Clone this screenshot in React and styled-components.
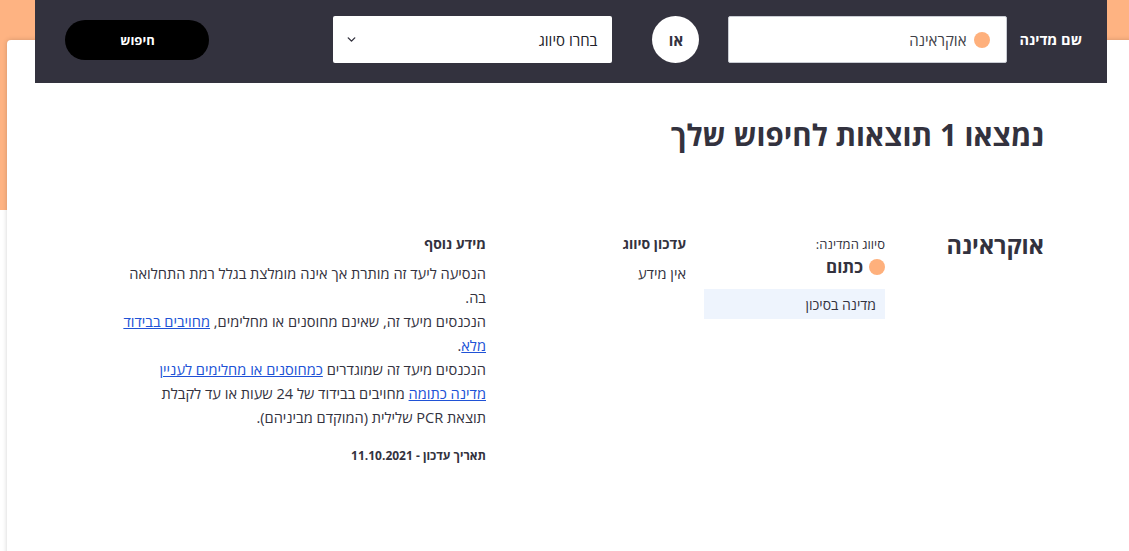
import React from "react";
import styled, { createGlobalStyle } from "styled-components";
import { ChevronDown } from "lucide-react";

const GlobalStyle = createGlobalStyle`
  html, body {
    margin: 0;
    padding: 0;
    overflow: hidden;
    background: #ffffff;
  }
  body {
    font-family: "Open Sans", "DejaVu Sans", sans-serif;
    color: #33323e;
  }
`;

const App = () => {
  return (
    <Page>
      <GlobalStyle />
      <Card>
        <SearchBar>
          <FieldLabel>שם מדינה</FieldLabel>
          <CountryInput>
            <Dot />
            <span>אוקראינה</span>
          </CountryInput>
          <OrCircle>או</OrCircle>
          <Select>
            <span>בחרו סיווג</span>
            <ChevronDown size={13} strokeWidth={2.6} color="#33323e" />
          </Select>
          <SearchButton>חיפוש</SearchButton>
        </SearchBar>

        <Content>
          <Title>נמצאו 1 תוצאות לחיפוש שלך</Title>

          <ResultRow>
            <CountryName>אוקראינה</CountryName>

            <Column>
              <SmallLabel>סיווג המדינה:</SmallLabel>
              <StatusLine>
                <Dot />
                <StatusText>כתום</StatusText>
              </StatusLine>
              <RiskBox>מדינה בסיכון</RiskBox>
            </Column>

            <Column>
              <ColHead>עדכון סיווג</ColHead>
              <BodyText>אין מידע</BodyText>
            </Column>

            <Column>
              <ColHead>מידע נוסף</ColHead>
              <BodyText>
                הנסיעה ליעד זה מותרת אך אינה מומלצת בגלל רמת התחלואה בה.
                <br />
                הנכנסים מיעד זה, שאינם מחוסנים או מחלימים,{" "}
                <InfoLink href="#">מחויבים בבידוד מלא</InfoLink>.
                <br />
                הנכנסים מיעד זה שמוגדרים{" "}
                <InfoLink href="#">כמחוסנים או מחלימים לעניין מדינה כתומה</InfoLink>{" "}
                מחויבים בבידוד של 24 שעות או עד לקבלת תוצאת PCR שלילית (המוקדם מביניהם).
              </BodyText>
              <UpdateDate>תאריך עדכון - 11.10.2021</UpdateDate>
            </Column>
          </ResultRow>
        </Content>
      </Card>
    </Page>
  );
};

export default App;

const Page = styled.div`
  direction: rtl;
  min-height: 551px;
  padding-top: 40px;
  box-sizing: border-box;
  background: linear-gradient(#feb382 0, #feb382 210px, #ffffff 210px);
`;

const Card = styled.div`
  direction: ltr;
  margin-left: 7px;
  margin-right: -20px;
  min-height: 530px;
  background: #ffffff;
  border-radius: 4px 0 0 0;
  box-shadow: 0 0 5px rgba(0, 0, 0, 0.18);
  display: flex;
  flex-direction: column;
`;

const SearchBar = styled.div`
  direction: rtl;
  margin-top: -40px;
  margin-left: 28px;
  width: 1072px;
  height: 83px;
  box-sizing: border-box;
  padding: 0 25px 4px 0;
  background: #33323e;
  display: flex;
  align-items: center;
`;

const FieldLabel = styled.label`
  color: #ffffff;
  font-weight: 700;
  font-size: 14.5px;
  margin-left: 12px;
`;

const CountryInput = styled.div`
  width: 279px;
  height: 47px;
  box-sizing: border-box;
  background: #ffffff;
  border: 1px solid #c9ccd3;
  border-radius: 2px;
  padding: 0 16px;
  display: flex;
  align-items: center;
  gap: 8px;
  font-size: 15px;
  color: #3f3f48;
  margin-left: 29px;
`;

const Dot = styled.span`
  width: 16px;
  height: 16px;
  border-radius: 50%;
  background: #feb07c;
  flex-shrink: 0;
`;

const OrCircle = styled.div`
  width: 47px;
  height: 47px;
  border-radius: 50%;
  background: #ffffff;
  display: flex;
  align-items: center;
  justify-content: center;
  font-weight: 700;
  font-size: 15px;
  color: #33323e;
  margin-left: 40px;
`;

const Select = styled.div`
  width: 279px;
  height: 47px;
  box-sizing: border-box;
  background: #ffffff;
  border-radius: 2px;
  padding: 0 15px 0 12px;
  display: flex;
  align-items: center;
  justify-content: space-between;
  font-size: 15px;
  color: #22222a;
  margin-left: 124px;
`;

const SearchButton = styled.button`
  width: 144px;
  height: 40px;
  border: none;
  border-radius: 20px;
  background: #000000;
  color: #ffffff;
  font-family: inherit;
  font-weight: 700;
  font-size: 13px;
  cursor: pointer;
`;

const Content = styled.div`
  direction: rtl;
  padding: 30px 85px 40px 0;
  width: 1037px;
  box-sizing: content-box;
`;

const Title = styled.h1`
  margin: 0;
  font-size: 29.5px;
  font-weight: 700;
  line-height: 44px;
  color: #33323e;
`;

const ResultRow = styled.div`
  display: grid;
  grid-template-columns: 141px 181px 182px 363px;
  column-gap: 18px;
  margin-top: 73px;
  align-items: start;
`;

const CountryName = styled.h2`
  margin: 0;
  font-size: 23.5px;
  font-weight: 700;
  line-height: 30px;
  color: #33323e;
`;

const Column = styled.div`
  display: flex;
  flex-direction: column;
  padding-top: 6px;
`;

const SmallLabel = styled.div`
  font-size: 13px;
  line-height: 16px;
  color: #33323e;
`;

const StatusLine = styled.div`
  display: flex;
  align-items: center;
  gap: 6px;
  margin: 4px 0 11px;
`;

const StatusText = styled.span`
  font-size: 17px;
  font-weight: 700;
  line-height: 22px;
`;

const RiskBox = styled.div`
  background: #eef4fd;
  height: 30px;
  padding: 0 9px;
  display: flex;
  align-items: center;
  font-size: 14px;
  color: #33323e;
`;

const ColHead = styled.div`
  font-size: 14px;
  font-weight: 700;
  line-height: 16px;
  margin-bottom: 9px;
`;

const BodyText = styled.div`
  font-size: 14.6px;
  line-height: 24px;
  color: #33323e;
`;

const InfoLink = styled.a`
  color: #2052d6;
  text-decoration: underline;
`;

const UpdateDate = styled.div`
  font-size: 12px;
  font-weight: 700;
  margin-top: 18px;
`;
